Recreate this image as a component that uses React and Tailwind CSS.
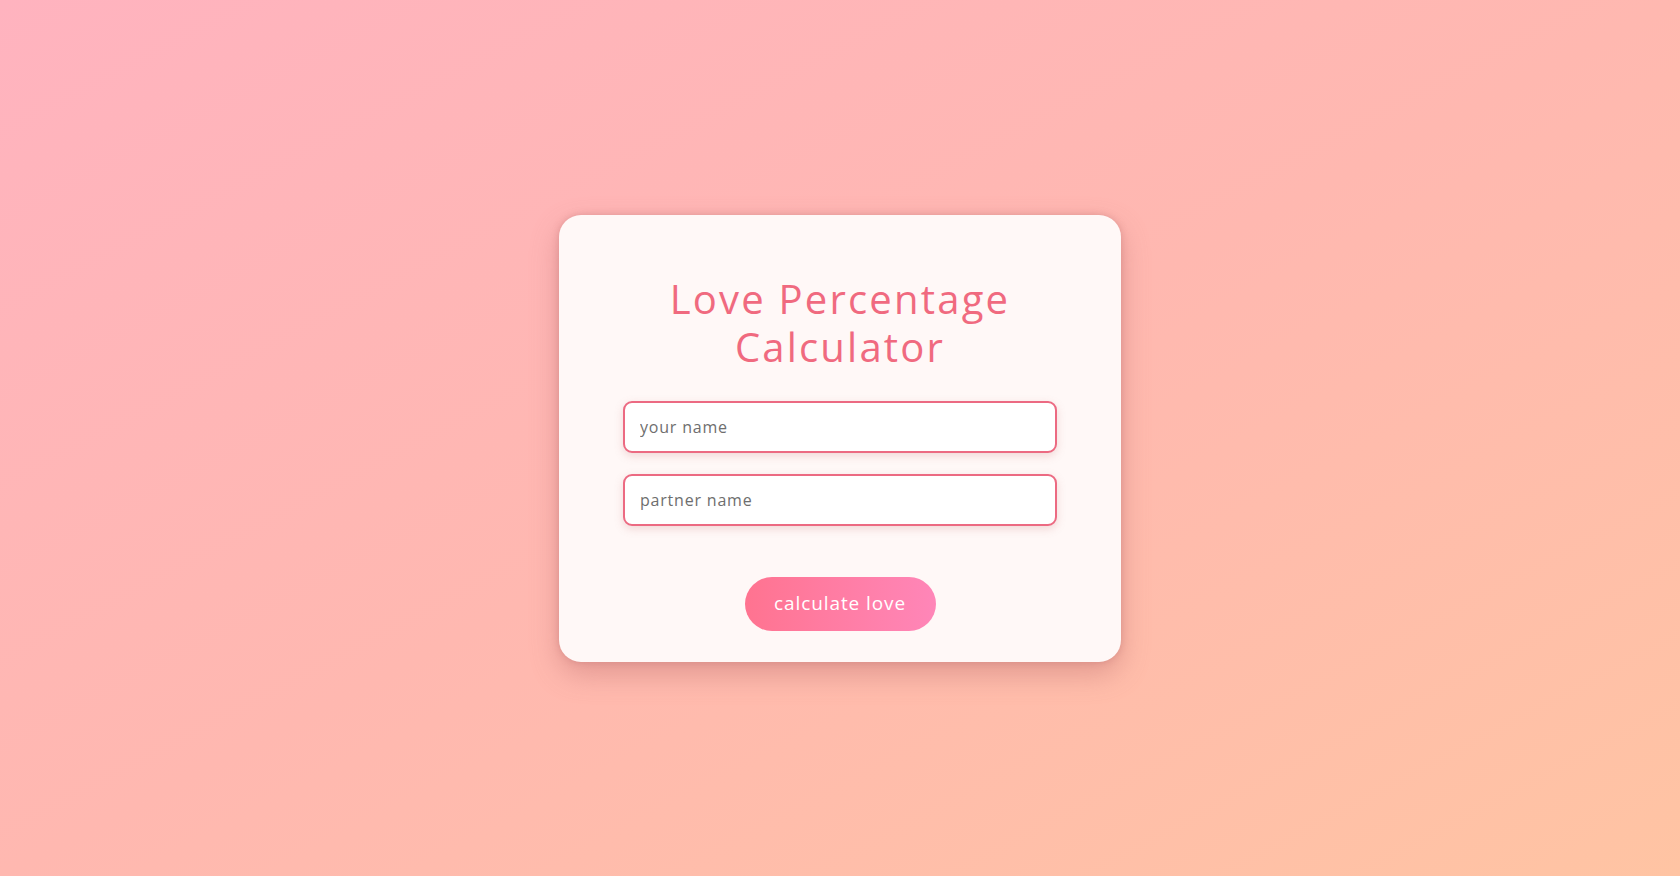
export default function App() {
  return (
    <div className="min-h-screen w-full flex items-center justify-center bg-gradient-to-br from-[#ffb3bf] via-[#ffb8b0] to-[#ffc4a3] font-['Open_Sans',sans-serif]">
      <div className="w-[562px] bg-[#fff8f7] rounded-[22px] shadow-[0_12px_28px_rgba(190,110,110,0.45),0_0_7px_rgba(190,110,110,0.4)] px-[63px] pt-[60px] pb-[31px] flex flex-col items-center">
        <h1 className="text-[40px] leading-[48px] tracking-[2.2px] text-[#f06a7f] text-center font-normal">
          Love Percentage
          <br />
          Calculator
        </h1>
        <input
          type="text"
          placeholder="your name"
          className="mt-[30px] w-[434px] h-[52px] rounded-[9px] border-2 border-[#ec6a82] bg-white px-[15px] text-[16px] tracking-[0.8px] text-[#555] placeholder:text-[#6e6e6e] outline-none shadow-[0_3px_8px_rgba(200,120,120,0.25)]"
        />
        <input
          type="text"
          placeholder="partner name"
          className="mt-[21px] w-[434px] h-[52px] rounded-[9px] border-2 border-[#ec6a82] bg-white px-[15px] text-[16px] tracking-[0.8px] text-[#555] placeholder:text-[#6e6e6e] outline-none shadow-[0_3px_8px_rgba(200,120,120,0.25)]"
        />
        <button className="mt-[51px] w-[191px] h-[54px] rounded-full bg-gradient-to-r from-[#ff7390] to-[#ff86b8] text-white text-[19px] tracking-[0.9px]">
          calculate love
        </button>
      </div>
    </div>
  );
}
